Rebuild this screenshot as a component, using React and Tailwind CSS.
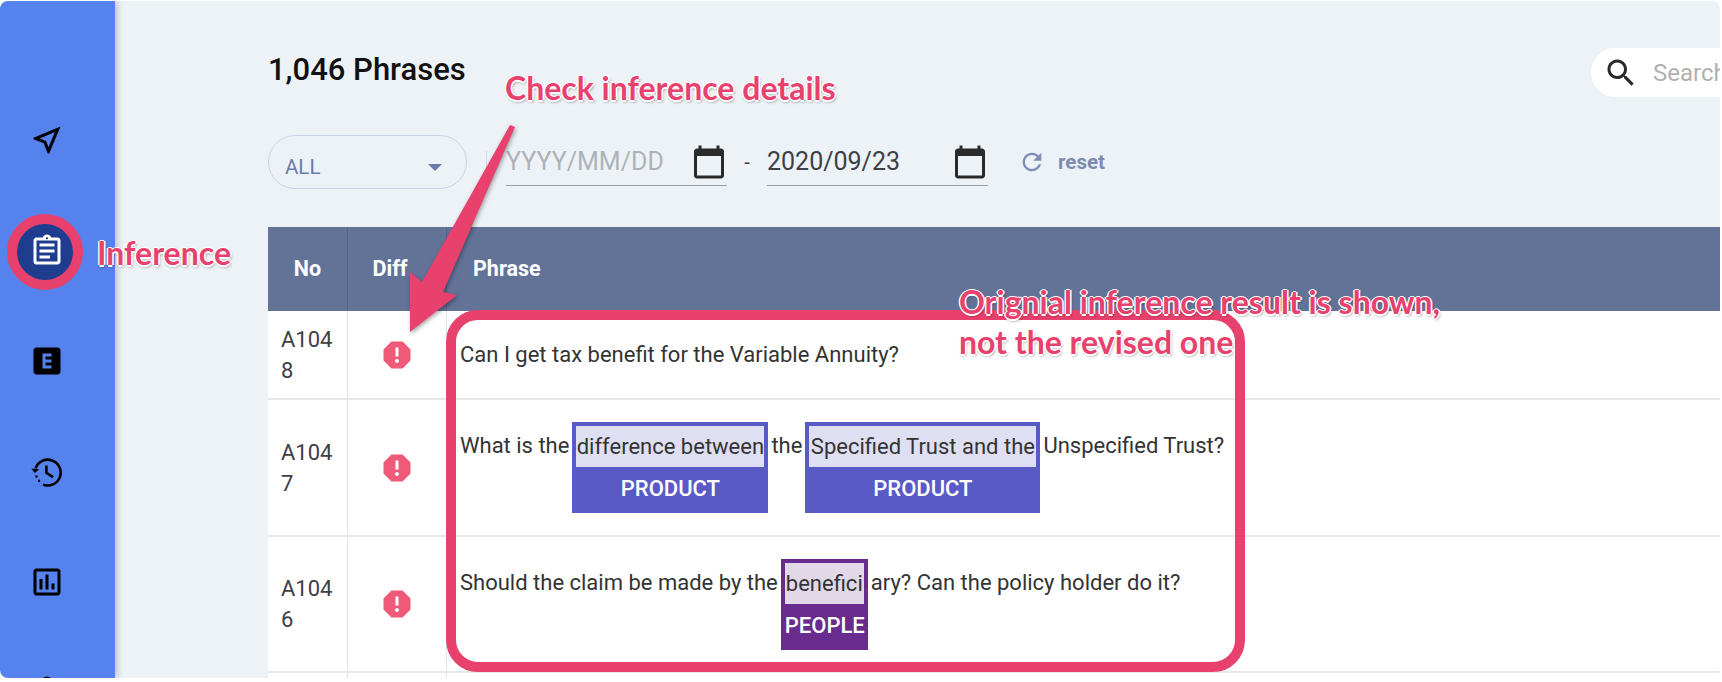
const NEAR_ME =
  "M17.27 6.73l-4.24 10.13-1.32-3.42-.32-.83-.82-.32-3.43-1.33 10.13-4.23M21 3L3 10.53v.98l6.84 2.65L12.48 21h.98L21 3z";
const ASSIGNMENT =
  "M7 15h7v2H7zm0-4h10v2H7zm0-4h10v2H7zm12-4h-4.18C14.4 1.84 13.3 1 12 1c-1.3 0-2.4.84-2.82 2H5c-.14 0-.27.01-.4.04-.39.08-.74.28-1.01.55-.18.18-.33.4-.43.64-.1.23-.16.49-.16.77v14c0 .27.06.54.16.78s.25.45.43.64c.27.27.62.47 1.01.55.13.02.26.03.4.03h14c1.1 0 2-.9 2-2V5c0-1.1-.9-2-2-2zm-7-.25c.41 0 .75.34.75.75s-.34.75-.75.75-.75-.34-.75-.75.34-.75.75-.75zM19 19H5V5h14v14z";
const EXPLICIT =
  "M19 3H5c-1.1 0-2 .9-2 2v14c0 1.1.9 2 2 2h14c1.1 0 2-.9 2-2V5c0-1.1-.9-2-2-2zm-4 6h-4v2h4v2h-4v2h4v2H9V7h6v2z";
const ASSESSMENT =
  "M19 3H5c-1.1 0-2 .9-2 2v14c0 1.1.9 2 2 2h14c1.1 0 2-.9 2-2V5c0-1.1-.9-2-2-2zm0 16H5V5h14v14zM7 10h2v7H7zm4-3h2v10h-2zm4 6h2v4h-2z";
const REPORT =
  "M15.73 3H8.27L3 8.27v7.46L8.27 21h7.46L21 15.73V8.27L15.73 3zM12 17.3c-.72 0-1.3-.58-1.3-1.3 0-.72.58-1.3 1.3-1.3.72 0 1.3.58 1.3 1.3 0 .72-.58 1.3-1.3 1.3zm1-4.3h-2V7h2v6z";
const CALENDAR =
  "M20 3h-1V1h-2v2H7V1H5v2H4c-1.1 0-2 .9-2 2v16c0 1.1.9 2 2 2h16c1.1 0 2-.9 2-2V5c0-1.1-.9-2-2-2zm0 18H4V8h16v13z";
const SEARCH =
  "M15.5 14h-.79l-.28-.27C15.41 12.59 16 11.11 16 9.5 16 5.91 13.09 3 9.5 3S3 5.91 3 9.5 5.91 16 9.5 16c1.61 0 3.09-.59 4.23-1.57l.27.28v.79l5 4.99L20.49 19l-4.99-5zm-6 0C7.01 14 5 11.99 5 9.5S7.01 5 9.5 5 14 7.01 14 9.5 11.99 14 9.5 14z";
const REFRESH =
  "M17.65 6.35C16.2 4.9 14.21 4 12 4c-4.42 0-7.99 3.58-7.99 8s3.57 8 7.99 8c3.73 0 6.84-2.55 7.73-6h-2.08c-.82 2.33-3.04 4-5.65 4-3.31 0-6-2.69-6-6s2.69-6 6-6c1.66 0 3.14.69 4.22 1.78L13 11h7V4l-2.35 2.35z";
const PERSON = "M12 1a4 4 0 1 0 0 8 4 4 0 0 0 0-8z";

const labelClass =
  "absolute z-20 font-['Lato',sans-serif] font-bold text-[32px] leading-[40px] text-[#e9416e] whitespace-nowrap [text-shadow:-1.5px_0_0_#fff,1.5px_0_0_#fff,0_-1.5px_0_#fff,0_1.5px_0_#fff,1px_2px_3px_rgba(0,0,0,0.45)]";

function Mi({ d, className }) {
  return (
    <svg viewBox="0 0 24 24" fill="currentColor" className={`shrink-0 ${className}`}>
      <path d={d} />
    </svg>
  );
}

function HistoryIcon() {
  return (
    <svg viewBox="1 0 24 24" className="h-9 w-9 shrink-0 text-black" fill="none" stroke="currentColor">
      <path d="M5.4 9.6A8.6 8.6 0 1 1 10.4 20.4" strokeWidth="1.7" />
      <path d="M2.6 9.6l2.3 3 2.9-2.4z" fill="currentColor" stroke="none" />
      <circle cx="6" cy="15" r="0.8" fill="currentColor" stroke="none" />
      <circle cx="7.7" cy="17.8" r="0.8" fill="currentColor" stroke="none" />
      <path d="M12.6 7.6v5l4.4 2.8" strokeWidth="1.7" />
    </svg>
  );
}

function Sidebar() {
  return (
    <aside className="relative z-10 flex w-[115px] shrink-0 flex-col items-start gap-[74.5px] bg-[#5582ec] pl-[29px] pt-[121px] shadow-[3px_0_6px_rgba(0,0,0,0.18)]">
      <Mi d={NEAR_ME} className="h-9 w-9 text-black" />
      <div className="relative h-9 w-9 shrink-0 text-white">
        <div className="absolute left-[-22px] top-[-19px] h-[76px] w-[76px] rounded-full border-[10px] border-[#e9416e] bg-[#1f3d8f]" />
        <Mi d={ASSIGNMENT} className="relative h-9 w-9" />
      </div>
      <Mi d={EXPLICIT} className="h-9 w-9 text-black" />
      <HistoryIcon />
      <Mi d={ASSESSMENT} className="h-9 w-9 text-black" />
      <Mi d={PERSON} className="h-9 w-9 text-black" />
    </aside>
  );
}

function DateField({ value, muted }) {
  return (
    <div className="mb-[3px] flex h-[51px] w-[221px] items-center justify-between border-b border-[#9a9ea6] pt-[3px]">
      <span className={`text-[25px] ${muted ? "text-[#aeb2b8]" : "text-[#3d4045]"}`}>{value}</span>
      <Mi d={CALENDAR} className="h-9 w-9 text-[#2a2a2a]" />
    </div>
  );
}

function Chip({ text, label, edge, fill, tint, width }) {
  return (
    <div className={`flex flex-col border-x-4 border-t-4 ${width} ${edge}`}>
      <div className={`h-[41px] whitespace-nowrap text-center leading-[41px] ${tint}`}>{text}</div>
      <div className={`h-[46px] whitespace-nowrap text-center font-medium leading-[44px] text-white ${fill}`}>{label}</div>
    </div>
  );
}

function Row({ no, children, rowClass, hideIcon }) {
  return (
    <div className={`grid grid-cols-[80px_99px_1fr] border-b-2 border-[#e6e7e9] bg-white ${rowClass}`}>
      <div className="flex items-center border-r border-[#dfe2e6] pl-[13px] pr-[14px] leading-[31px] break-all text-[#3d4045]">
        <span>{no}</span>
      </div>
      <div className="flex items-center justify-center border-r border-[#dfe2e6]">
        {!hideIcon && <Mi d={REPORT} className="h-9 w-9 text-[#ee5a78]" />}
      </div>
      <div className="flex items-center pl-[13px] text-[#333]">{children}</div>
    </div>
  );
}

export default function App() {
  return (
    <div className="h-[682px] w-[1722px] overflow-hidden bg-white pt-px font-['Roboto',sans-serif]">
      <div className="relative flex h-[677px] w-[1720px] overflow-hidden rounded-lg">
        <Sidebar />

        <main className="min-w-0 flex-1 bg-[#edf2f7] pl-[153px] pt-[47px]">
          <div className="flex h-[49px] items-start justify-between">
            <h1 className="text-[31px] font-medium leading-[44px] text-[#111]">1,046 Phrases</h1>
            <div className="flex h-[49px] w-[129px] items-center overflow-hidden rounded-l-full bg-white pl-3">
              <Mi d={SEARCH} className="h-9 w-9 text-[#2a2a2a]" />
              <span className="ml-[14px] text-[24px] text-[#b0b0b0]">Search</span>
            </div>
          </div>

          <div className="mt-[38px] flex h-[54px] items-center">
            <div className="flex h-[54px] w-[199px] items-center justify-between rounded-full border border-[#c9d4e6] pl-[16px] pr-[24px] pt-[10px] text-[20.5px] text-[#6a7aa8]">
              ALL
              <span className="h-0 w-0 border-x-[7px] border-t-[7px] border-x-transparent border-t-[#6a7aa8]" />
            </div>
            <div className="ml-[19px] mr-[19px] h-[22px] w-px bg-[#d5d9df]" />
            <DateField value="YYYY/MM/DD" muted />
            <span className="w-[40px] text-center text-[20px] text-[#3d4045]">-</span>
            <DateField value="2020/09/23" />
            <Mi d={REFRESH} className="ml-[30px] h-7 w-7 text-[#7d8db5]" />
            <span className="ml-[12px] text-[20.5px] font-bold text-[#7d8bb0]">reset</span>
          </div>

          <div className="mt-[38px] text-[22px]">
            <div className="grid h-[84px] grid-cols-[80px_99px_1fr] bg-[#637398] text-[21.5px] font-bold text-white">
              <div className="flex items-center justify-center border-r border-[#55658a]">No</div>
              <div className="flex items-center justify-center border-r border-[#55658a] pr-[14px]">Diff</div>
              <div className="flex items-center pl-[26px]">Phrase</div>
            </div>

            <Row no="A1048" rowClass="h-[89px]">
              Can I get tax benefit for the Variable Annuity?
            </Row>

            <Row no="A1047" rowClass="h-[137px]">
              <div className="flex items-start">
                <span className="leading-[48px]">What is the</span>
                <Chip
                  text="difference between"
                  label="PRODUCT"
                  edge="border-[#5a5ac6]"
                  fill="bg-[#5a5ac6]"
                  tint="bg-[#dedff2]"
                  width="ml-[3px] w-[196px]"
                />
                <span className="mx-[3px] leading-[48px]">the</span>
                <Chip
                  text="Specified Trust and the"
                  label="PRODUCT"
                  edge="border-[#5a5ac6]"
                  fill="bg-[#5a5ac6]"
                  tint="bg-[#dedff2]"
                  width="w-[235px]"
                />
                <span className="ml-[3px] leading-[48px]">Unspecified Trust?</span>
              </div>
            </Row>

            <Row no="A1046" rowClass="h-[136px]">
              <div className="flex items-start">
                <span className="leading-[48px]">Should the claim be made by the</span>
                <Chip
                  text="benefici"
                  label="PEOPLE"
                  edge="border-[#692c8e]"
                  fill="bg-[#692c8e]"
                  tint="bg-[#e1d9e8]"
                  width="ml-[3px] w-[87px]"
                />
                <span className="ml-[3px] leading-[48px]">ary? Can the policy holder do it?</span>
              </div>
            </Row>

            <Row no="" rowClass="h-[40px]" hideIcon />
          </div>
        </main>

        {/* annotation layer */}
        <div className="pointer-events-none absolute left-[446px] top-[309px] z-20 h-[362px] w-[799px] rounded-[32px] border-[10px] border-[#e9416e]" />
        <svg className="pointer-events-none absolute left-0 top-0 z-20 h-[677px] w-[1720px]" viewBox="0 0 1720 677">
          <polygon
            points="510,124 515,126 443,291 457,294 410,331 410,271 422,281"
            fill="#e9416e"
            className="[filter:drop-shadow(1px_2px_2px_rgba(0,0,0,0.35))]"
          />
        </svg>
        <span className={`${labelClass} left-[97px] top-[232px]`}>Inference</span>
        <span className={`${labelClass} left-[505px] top-[67px]`}>Check inference details</span>
        <span className={`${labelClass} left-[959px] top-[281px]`}>Orignial inference result is shown,</span>
        <span className={`${labelClass} left-[959px] top-[321px]`}>not the revised one</span>
      </div>
    </div>
  );
}
